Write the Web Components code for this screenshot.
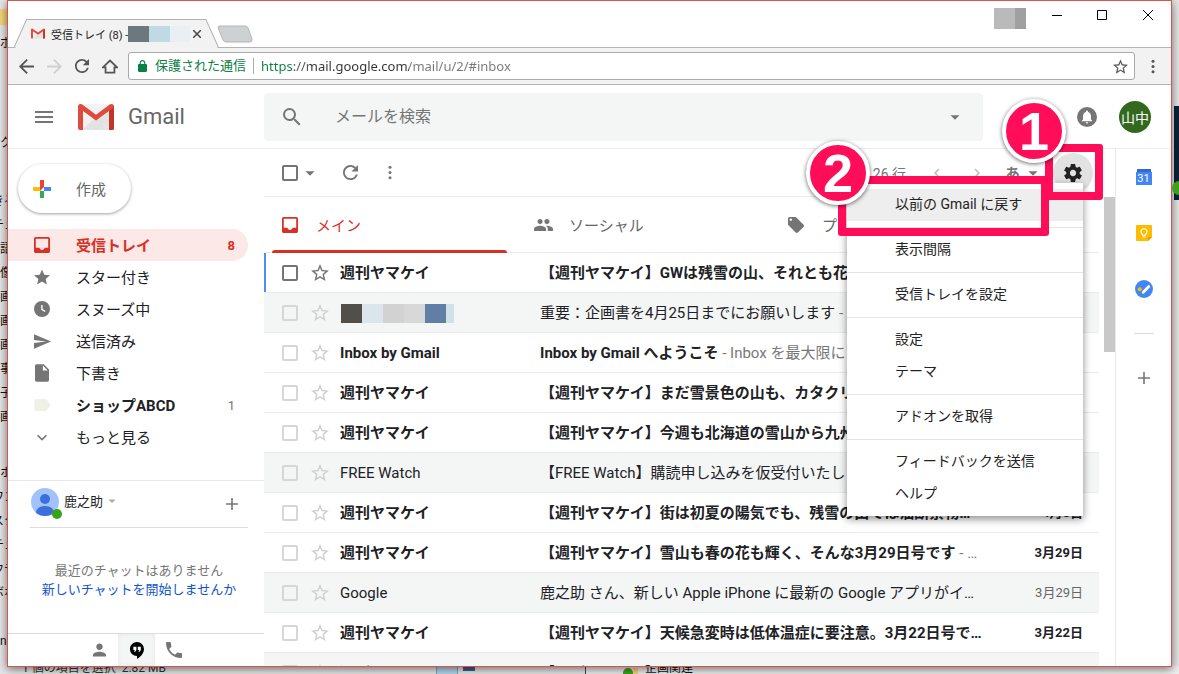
<!DOCTYPE html>
<html lang="ja">
<head>
<meta charset="utf-8">
<title>受信トレイ (8) - Gmail</title>
<style>
html, body { margin: 0; height: 100%; }
body { font-family: Roboto, "Noto Sans CJK JP", sans-serif; font-size: 15px; color: #202124; overflow: hidden; }
</style>
</head>
<body>
<desk-scene></desk-scene>
<script>
const BASE = `*{box-sizing:border-box}
button{font:inherit;color:inherit;background:none;border:0;padding:0;margin:0;display:flex;align-items:center;justify-content:center}
ul{list-style:none;margin:0;padding:0}a{color:inherit;text-decoration:none}input{font:inherit;margin:0}`;

function define(name, markup) {
  const template = document.createElement('template');
  customElements.define(name, class extends HTMLElement {
    constructor() {
      super();
      template.innerHTML = `<style>${BASE}</style>` + markup;
      this.attachShadow({ mode: 'open' }).append(template.content.cloneNode(true));
    }
  });
}

/* ---------- icons: [viewBox, markup] ---------- */
const envelope = `<path fill="#f2f2f2" d="M2 0h32v26H2z"/><path fill="#e3e3e3" d="M4 26 18 13l14 13z"/><path fill="#d8d8d8" d="M34 26V5L20 16z" opacity=".6"/>
<path fill="#dd4b3e" d="M2.500 0A2.500 2.500 0 0 0 0 2.500V24a2 2 0 0 0 2 2h3V7l13 9.500L31 7v19h3a2 2 0 0 0 2-2V2.500A2.500 2.500 0 0 0 33.500 0c-.8 0-1.300.2-1.800.6L18 10.700 4.300.6C3.800.2 3.300 0 2.500 0z"/><path fill="#c23527" d="M31 7l5-4v21a2 2 0 0 1-2 2h-3z"/>`;
const ICONS = {
  gmail: ['0 0 36 26', envelope],
  menu: ['3 6 18 12', '<path d="M3 18h18v-2H3v2zm0-5h18v-2H3v2zm0-7v2h18V6H3z"/>'],
  search: ['3 3 18 18', '<path d="M15.500 14h-.79l-.28-.27A6.471 6.471 0 0 0 16 9.500 6.500 6.500 0 1 0 9.500 16c1.610 0 3.090-.59 4.230-1.570l.27.28v.79l5 4.990L20.490 19l-4.990-5zm-6 0C7.010 14 5 11.990 5 9.500S7.010 5 9.500 5 14 7.010 14 9.500 11.990 14 9.500 14z"/>'],
  caret: ['0 0 24 24', '<path d="M6 9.500l6 6 6-6z"/>'],
  refresh: ['4 4 16 16', '<path d="M17.650 6.350A7.958 7.958 0 0 0 12 4c-4.420 0-7.990 3.580-7.990 8s3.570 8 7.990 8c3.730 0 6.840-2.550 7.730-6h-2.080A5.990 5.990 0 0 1 12 18c-3.310 0-6-2.690-6-6s2.690-6 6-6c1.660 0 3.140.69 4.220 1.780L13 11h7V4l-2.350 2.350z"/>'],
  dots: ['0 0 4 16', '<circle cx="2" cy="2.500" r="1.600"/><circle cx="2" cy="8" r="1.600"/><circle cx="2" cy="13.500" r="1.600"/>'],
  inbox: ['3 3 18 18', '<path d="M19 3H5c-1.100 0-2 .9-2 2v14c0 1.100.9 2 2 2h14c1.100 0 2-.9 2-2V5c0-1.100-.9-2-2-2zm0 12h-4c-.4 1.400-1.500 2.500-3 2.500S9.400 16.400 9 15H5V5h14v10z"/>'],
  star: ['2 2 20 19', '<path d="M12 17.270L18.180 21l-1.640-7.030L22 9.240l-7.190-.61L12 2 9.190 8.630 2 9.240l5.460 4.730L5.820 21z"/>'],
  starLine: ['2 2 20 19', '<path d="M22 9.240l-7.190-.62L12 2 9.190 8.630 2 9.240l5.460 4.730L5.820 21 12 17.270 18.180 21l-1.630-7.030L22 9.240zM12 15.400l-3.760 2.270 1-4.280-3.320-2.880 4.380-.38L12 6.100l1.710 4.040 4.380.38-3.320 2.880 1 4.280L12 15.400z"/>'],
  clock: ['0 0 16 16', '<path fill-rule="evenodd" d="M8 0a8 8 0 1 0 0 16A8 8 0 0 0 8 0zM7.200 4h1.400v4.100l3 1.900-.7 1.100L7.200 8.800z"/>'],
  send: ['2 3 21 18', '<path d="M2.010 21L23 12 2.010 3 2 10l15 2-15 2z"/>'],
  file: ['4 2 16 20', '<path d="M6 2c-1.100 0-2 .9-2 2v16c0 1.100.9 2 2 2h12c1.100 0 2-.9 2-2V8l-6-6H6zm7 7V3.500L18.500 9H13z"/>'],
  label: ['3 5 19 14', '<path d="M17.630 5.840C17.270 5.330 16.670 5 16 5L5 5.010C3.900 5.010 3 5.900 3 7v10c0 1.100.9 1.990 2 1.990L16 19c.67 0 1.270-.33 1.630-.84L22 12z"/>'],
  more: ['6 8 12 8', '<path d="M16.590 8.590L12 13.170 7.410 8.590 6 10l6 6 6-6z"/>'],
  prev: ['8 6 8 12', '<path d="M15.410 7.410L14 6l-6 6 6 6 1.410-1.410L10.830 12z"/>'],
  next: ['8 6 8 12', '<path d="M10 6L8.590 7.410 13.170 12l-4.580 4.590L10 18l6-6z"/>'],
  people: ['1 5 22 14', '<path d="M16 11c1.660 0 2.990-1.340 2.990-3S17.660 5 16 5s-3 1.340-3 3 1.340 3 3 3zm-8 0c1.660 0 2.990-1.340 2.990-3S9.660 5 8 5 5 6.340 5 8s1.340 3 3 3zm0 2c-2.330 0-7 1.170-7 3.500V19h14v-2.500c0-2.330-4.670-3.500-7-3.500zm8 0c-.29 0-.62.02-.97.05 1.160.84 1.970 1.970 1.970 3.450V19h6v-2.500c0-2.330-4.670-3.500-7-3.500z"/>'],
  tag: ['2 2 20 20', '<path d="M21.410 11.580l-9-9C12.050 2.220 11.550 2 11 2H4c-1.100 0-2 .9-2 2v7c0 .55.22 1.050.59 1.420l9 9c.36.36.86.58 1.410.58.55 0 1.050-.22 1.410-.59l7-7c.37-.36.59-.86.59-1.410 0-.55-.23-1.060-.59-1.420zM5.500 7C4.670 7 4 6.330 4 5.500S4.670 4 5.500 4 7 4.670 7 5.500 6.330 7 5.500 7z"/>'],
  gear: ['2 2 20 20', '<path d="M19.430 12.980c.04-.32.07-.64.07-.98s-.03-.66-.07-.98l2.110-1.650c.19-.15.24-.42.12-.64l-2-3.460c-.12-.22-.39-.3-.61-.22l-2.490 1c-.52-.4-1.080-.73-1.690-.98l-.38-2.650C14.460 2.180 14.250 2 14 2h-4c-.25 0-.46.18-.49.42l-.38 2.650c-.61.25-1.170.59-1.690.98l-2.490-1c-.23-.09-.49 0-.61.22l-2 3.460c-.13.22-.07.49.12.64l2.110 1.650c-.04.32-.07.65-.07.98s.03.66.07.98l-2.110 1.650c-.19.15-.24.42-.12.64l2 3.460c.12.22.39.3.61.22l2.490-1c.52.4 1.080.73 1.690.98l.38 2.650c.03.24.24.42.49.42h4c.25 0 .46-.18.49-.42l.38-2.650c.61-.25 1.170-.59 1.690-.98l2.490 1c.23.09.49 0 .61-.22l2-3.460c.12-.22.07-.49-.12-.64l-2.110-1.650zM12 15.500c-1.930 0-3.500-1.570-3.500-3.500s1.570-3.500 3.500-3.500 3.500 1.570 3.500 3.500-1.570 3.500-3.500 3.500z"/>'],
  bell: ['0 0 20 20', '<circle cx="10" cy="10" r="10"/><path fill="#fff" d="M10 3.500a1 1 0 0 0-1 1v.4C7.200 5.400 6 7 6 9v3.500L4.800 13.700v.6h10.400v-.6L14 12.500V9c0-2-1.200-3.600-3-4.100v-.4a1 1 0 0 0-1-1zM8.700 15.200a1.300 1.300 0 0 0 2.600 0z"/>'],
  person: ['4 4 16 16', '<path d="M12 12c2.210 0 4-1.790 4-4s-1.790-4-4-4-4 1.790-4 4 1.790 4 4 4zm0 2c-2.670 0-8 1.340-8 4v2h16v-2c0-2.660-5.330-4-8-4z"/>'],
  phone: ['3 3 18 18', '<path d="M6.620 10.790c1.440 2.830 3.760 5.140 6.590 6.590l2.200-2.200c.27-.27.67-.36 1.020-.24 1.120.37 2.330.57 3.570.57.55 0 1 .45 1 1V20c0 .55-.45 1-1 1-9.390 0-17-7.610-17-17 0-.55.45-1 1-1h3.500c.55 0 1 .45 1 1 0 1.250.2 2.450.57 3.570.11.35.03.74-.25 1.020z"/>'],
  hangouts: ['0 0 14 17', '<path d="M7 0a7 7 0 0 0-.2 14H7v2.800c3-1.500 7-5 7-9.800a7 7 0 0 0-7-7z"/><path fill="#fff" d="M3.400 4.800h3v3.100L5.200 9.700H4l.8-1.800H3.400zM7.800 4.800h3v3.100L9.600 9.700H8.400l.8-1.800H7.800z"/>'],
  plus: ['0 0 12 12', '<path d="M5.200 0h1.600v5.200H12v1.600H6.800V12H5.200V6.800H0V5.200h5.200z"/>'],
  back: ['4 4 16 16', '<path d="M20 11H7.830l5.590-5.590L12 4l-8 8 8 8 1.410-1.410L7.830 13H20v-2z"/>'],
  forward: ['4 4 16 16', '<path d="M12 4l-1.410 1.410L16.170 11H4v2h12.170l-5.580 5.590L12 20l8-8z"/>'],
  home: ['0 0 18 16', '<path fill="none" stroke="currentColor" stroke-width="2" d="M1 9 9 1.300 17 9h-3v6H4V9z"/>'],
  lock: ['4 1 16 21', '<path d="M18 8h-1V6c0-2.760-2.240-5-5-5S7 3.240 7 6v2H6c-1.100 0-2 .9-2 2v10c0 1.100.9 2 2 2h12c1.100 0 2-.9 2-2V10c0-1.100-.9-2-2-2zM9 6c0-1.660 1.340-3 3-3s3 1.340 3 3v2H9V6z"/>'],
  compose: ['0 0 18 18', '<path fill="#ea4335" d="M7 0h4v7l-4 4z"/><path fill="#4285f4" d="M11 7h7v4h-7z"/><path fill="#34a853" d="M7 11h4v7H7z"/><path fill="#fbbc05" d="M0 7h7v4H0z"/>'],
  close: ['0 0 10 10', '<path fill="none" stroke="currentColor" stroke-width="var(--stroke, 1)" style="stroke-width:var(--stroke,1)" d="M0 0l10 10M10 0L0 10"/>'],
  minimize: ['0 0 10 10', '<path d="M0 5h10v1H0z"/>'],
  maximize: ['0 0 10 10', '<path fill="none" stroke="currentColor" d="M.5.5h9v9h-9z"/>'],
  face: ['0 0 28 28', '<circle cx="14" cy="14" r="14" fill="#a1c2fa"/><circle cx="14" cy="11" r="5" fill="#3b6fdc"/><path fill="#3b6fdc" d="M5 24.700c0-4 4-6.700 9-6.700s9 2.700 9 6.700A14 14 0 0 1 5 24.700z"/>'],
  calendar: ['0 0 16 16', '<path fill="#3367d6" d="M1 0h14v5H1z"/><path fill="#4285f4" d="M0 3h16v13H0z"/>'],
  keep: ['0 0 16 16', '<path fill="#fbbc04" d="M1 0h14a1 1 0 0 1 1 1v11l-4 4H1a1 1 0 0 1-1-1V1a1 1 0 0 1 1-1z"/><path fill="#f29900" d="M16 12l-4 4v-4z"/><path fill="none" stroke="#fff" stroke-width="1.100" d="M6.500 9.500C5.500 8.800 5 8 5 6.800a3 3 0 0 1 6 0c0 1.200-.5 2-1.500 2.700v.8h-3zM6.500 12h3"/>'],
  tasks: ['0 0 18 18', '<circle cx="9" cy="9" r="9" fill="#4285f4"/><path stroke="#fff" stroke-width="2.800" stroke-linecap="round" d="M8.200 12.200l5.600-5.700"/><circle cx="4.800" cy="9.300" r="2" fill="#fbbc04"/>'],
};
customElements.define('ui-icon', class extends HTMLElement {
  connectedCallback() {
    if (this.shadowRoot) return;
    const [box, art] = ICONS[this.getAttribute('name')];
    const w = this.getAttribute('w') || 16, h = this.getAttribute('h') || w;
    this.attachShadow({ mode: 'open' }).innerHTML = `<style>:host{display:inline-flex;flex:none}svg{display:block;fill:currentColor}</style>
      <svg width="${w}" height="${h}" viewBox="${box}" aria-hidden="true">${art}</svg>`;
  }
});

/* ---------- mosaic strip that masks private text ---------- */
customElements.define('mosaic-strip', class extends HTMLElement {
  connectedCallback() {
    if (this.shadowRoot) return;
    const cells = this.getAttribute('cells').split(' ').map(c => c.split(':'));
    this.attachShadow({ mode: 'open' }).innerHTML = `<style>:host{display:inline-flex;flex:none}i{display:block}</style>` +
      cells.map(([w, c]) => `<i style="width:${w}px;background:${c}"></i>`).join('');
  }
});

/* ---------- browser chrome ---------- */
define('browser-tabs', `<style>
:host{display:flex;flex:none;height:47px;background:#fff;border-bottom:1px solid #b3b3b3;padding-left:6px;font-size:11px;align-items:flex-end}
.tab{position:relative;display:flex;align-items:center;width:205px;height:29px;padding:0 11px 0 17px;margin-bottom:-1px;color:#222}
.tab svg{position:absolute;left:0;top:0;width:100%;height:100%}
.tab>*:not(svg){position:relative}
.title{margin-left:6px;width:77px;white-space:nowrap}
mosaic-strip{height:16px}
.x{margin-left:3px;color:#444;--stroke:1.8}
.new{margin:0 0 4px -2px}
.controls{margin-left:auto;align-self:flex-start;display:flex;align-items:center;height:28px;color:#000}
.controls mosaic-strip{height:21px;margin:6px 26px 0 0}
.controls button{width:10px;margin-right:35px}
.controls button:last-child{margin-right:18px;margin-left:1px}
</style>
<div class="tab"><svg viewBox="0 0 204 29" preserveAspectRatio="none"><path fill="#f2f2f2" stroke="#b3b3b3" d="M0 28.500 12.500.5H191L203.500 28.500"/><path fill="#f2f2f2" d="M2 28h200v1H2z"/></svg>
<ui-icon name="gmail" w="14" h="11"></ui-icon><span class="title">受信トレイ (8) -</span><mosaic-strip cells="21:#6b797e 21:#bfd9e5 20:#e9eff2"></mosaic-strip>
<button class="x" aria-label="タブを閉じる"><ui-icon name="close" w="8"></ui-icon></button></div>
<button class="new" aria-label="新しいタブ"><svg width="36" height="18" viewBox="0 0 36 18"><path fill="#ced1d1" stroke="#b5b5b5" d="M2 1h26q2 0 3 2l4 11q.5 3-2 3H9q-2 0-3-2L1.500 4Q.5 1 2 1z"/></svg></button>
<div class="controls"><mosaic-strip cells="21:#bababa 11:#a0a0a0"></mosaic-strip>
<button aria-label="最小化"><ui-icon name="minimize" w="10"></ui-icon></button>
<button aria-label="最大化"><ui-icon name="maximize" w="10"></ui-icon></button>
<button aria-label="閉じる"><ui-icon name="close" w="10"></ui-icon></button></div>`);

define('address-bar', `<style>
:host{display:flex;flex:none;align-items:center;height:37px;background:#f2f2f2;border-bottom:1px solid #b5b5b5;padding:0 10px 0 4px;color:#555}
.nav{width:28px;height:28px}
.box{flex:1;display:flex;align-items:center;height:28px;margin:0 10px 0 4px;padding:0 6px 0 9px;background:#fff;border:1px solid #a9a9a9;border-radius:3px;font-size:13px}
.box>*:first-child{color:#0b8043;margin-right:8px}
.secure{color:#0b8043;border-right:1px solid #aaa;width:99px;line-height:16px;white-space:nowrap}
input{flex:1;min-width:0;border:0;outline:0;padding:0 0 0 7px;font:13px "Noto Sans","Noto Sans CJK JP",sans-serif;color:#444;
 background:linear-gradient(90deg,#0b8043 39px,#555 39px,#555 55px,#333 55px,#333 155px,#777 155px);-webkit-background-clip:text;background-clip:text;-webkit-text-fill-color:transparent}
</style>
<button class="nav" aria-label="戻る"><ui-icon name="back" w="15"></ui-icon></button>
<button class="nav" aria-label="進む" style="color:#d0d0d0"><ui-icon name="forward" w="15"></ui-icon></button>
<button class="nav" aria-label="再読み込み"><ui-icon name="refresh" w="14"></ui-icon></button>
<button class="nav" aria-label="ホーム"><ui-icon name="home" w="16" h="15"></ui-icon></button>
<div class="box"><ui-icon name="lock" w="9" h="12"></ui-icon><span class="secure">保護された通信</span>
<input aria-label="アドレス" value="https://mail.google.com/mail/u/2/#inbox" spellcheck="false">
<button aria-label="ブックマーク"><ui-icon name="starLine" w="15"></ui-icon></button></div>
<button aria-label="Chrome の設定" style="width:16px"><ui-icon name="dots" w="4" h="15"></ui-icon></button>`);

/* ---------- Gmail header ---------- */
define('mail-header', `<style>
:host{display:flex;flex:none;align-items:center;height:64px;border-bottom:1px solid #ebedef;padding:0 20px 0 27px;color:#757575}
.brand{display:flex;align-items:center;gap:14px;width:186px;margin-left:25px;font-size:22px;color:#666}
form{flex:0 1 719px;display:flex;align-items:center;height:48px;background:#f4f6f6;border-radius:4px;padding:0 19px}
input{flex:1;min-width:0;background:none;border:0;outline:0;font-size:16px;padding:0 0 0 34px;color:#555}
input::placeholder{color:#757575;opacity:1}
.right{margin-left:auto;display:flex;align-items:center;gap:22px}
.avatar{width:32px;height:32px;border-radius:50%;background:#33691e;color:#fff;font-size:14px}
</style>
<button aria-label="メインメニュー"><ui-icon name="menu" w="18" h="12"></ui-icon></button>
<a class="brand" href="#inbox"><ui-icon name="gmail" w="36" h="26"></ui-icon><span>Gmail</span></a>
<form role="search"><button type="button" aria-label="検索"><ui-icon name="search" w="18"></ui-icon></button>
<input aria-label="メールを検索" placeholder="メールを検索">
<button type="button" aria-label="検索オプション"><ui-icon name="caret" w="18"></ui-icon></button></form>
<div class="right"><button aria-label="通知"><ui-icon name="bell" w="20"></ui-icon></button><button class="avatar">山中</button></div>`);

/* ---------- sidebar ---------- */
define('nav-item', `<style>
:host{display:block}
a{display:flex;align-items:center;height:32px;padding:0 13px 0 26px;color:#202124}
.icon{width:16px;display:flex;justify-content:center;margin-right:26px;color:#757575}
.name{padding-bottom:2px}
.count{margin-left:auto;font-size:13px;color:#757575}
:host([active]) a{background:#fce8e6;border-radius:0 16px 16px 0}
:host([active]) :is(a,.icon,.count){color:#d93025}
:host([active]) .count{font-weight:700}
:host([strong]) .name,:host([active]) .name{font-weight:700}
</style><a href="#"><span class="icon"><slot name="icon"></slot></span><span class="name"><slot></slot></span><span class="count"><slot name="count"></slot></span></a>`);

define('side-bar', `<style>
:host{display:flex;flex-direction:column;width:256px;flex:none;min-height:0}
.compose{flex:none;width:113px;height:49px;margin:15px 0 16px 10px;border-radius:25px;background:#fff;box-shadow:0 1px 3px rgba(60,64,67,.5);color:#666;justify-content:flex-start;padding-left:15px;gap:25px}
nav{margin-right:16px;padding-bottom:27px}
.chat{flex:1;display:flex;flex-direction:column;border-top:1px solid #e6e6e6;min-height:0}
.me{display:flex;flex:none;align-items:center;height:47px;margin:0 16px 0 22px;border-bottom:1px solid #ddd;font-size:13px;padding:0 10px 4px 1px}
.me .name{padding-bottom:3px}
.who{position:relative;display:flex;margin-right:5px}
.who i{position:absolute;right:-3px;bottom:-3px;width:10px;height:10px;border-radius:50%;background:#35a518}
.me .add{margin-left:auto;color:#777;padding-top:4px}
.empty{flex:1;margin:0 16px 0 22px;padding-top:33px;text-align:center;font-size:13px;line-height:19px;color:#777;white-space:nowrap}
.empty a{color:#15c;display:block}
.tabs{display:flex;height:33px;flex:none;border-top:1px solid #ddd;padding-left:73px;color:#757575}
.tabs button{width:37px;height:32px}
.tabs button.on{background:#f4f6f6;color:#000;box-shadow:inset 0 0 4px #e4e4e4}
</style>
<button class="compose"><ui-icon name="compose" w="18"></ui-icon>作成</button>
<nav>
<nav-item active><ui-icon slot="icon" name="inbox" w="16"></ui-icon>受信トレイ<span slot="count">8</span></nav-item>
<nav-item><ui-icon slot="icon" name="star" w="16"></ui-icon>スター付き</nav-item>
<nav-item><ui-icon slot="icon" name="clock" w="16"></ui-icon>スヌーズ中</nav-item>
<nav-item><ui-icon slot="icon" name="send" w="17" h="15"></ui-icon>送信済み</nav-item>
<nav-item><ui-icon slot="icon" name="file" w="14" h="18"></ui-icon>下書き</nav-item>
<nav-item strong><ui-icon slot="icon" name="label" w="17" h="12" style="color:#f0f1e6"></ui-icon>ショップABCD<span slot="count">1</span></nav-item>
<nav-item><ui-icon slot="icon" name="more" w="10" h="7"></ui-icon>もっと見る</nav-item>
</nav>
<section class="chat">
<div class="me"><span class="who"><ui-icon name="face" w="28"></ui-icon><i></i></span><button class="name">鹿之助<ui-icon name="caret" w="14" style="color:#aaa;margin-left:2px"></ui-icon></button>
<button class="add" aria-label="新しい会話"><ui-icon name="plus" w="12"></ui-icon></button></div>
<div class="empty">最近のチャットはありません<a href="#chat">新しいチャットを開始しませんか</a></div>
<div class="tabs"><button aria-label="連絡先"><ui-icon name="person" w="13" h="14"></ui-icon></button><button class="on" aria-label="ハングアウト"><ui-icon name="hangouts" w="14" h="17"></ui-icon></button><button aria-label="電話"><ui-icon name="phone" w="16"></ui-icon></button></div>
</section>`);

/* ---------- settings menu and callouts ---------- */
define('settings-menu', `<style>
:host{display:block;width:236px;padding:6px 0;background:#fff;box-shadow:0 3px 8px rgba(0,0,0,.45);font-size:14px;color:#222}
button{width:100%;height:32px;padding:0 0 4px 48px;justify-content:flex-start}
button.on{background:#eee}
hr{margin:6px 0;border:0;height:1px;background:#e5e5e5}
</style>
<div role="menu"><button role="menuitem" class="on">以前の Gmail に戻す</button><hr>
<button role="menuitem">表示間隔</button><hr>
<button role="menuitem">受信トレイを設定</button><hr>
<button role="menuitem">設定</button><button role="menuitem">テーマ</button><hr>
<button role="menuitem">アドオンを取得</button><hr>
<button role="menuitem">フィードバックを送信</button><button role="menuitem">ヘルプ</button></div>`);

define('step-badge', `<style>
:host{display:flex;align-items:center;justify-content:center;width:64px;height:64px;border-radius:50%;border:4px solid #fff;background:#ff0d59;color:#fff;font:700 54px/54px "Liberation Sans",sans-serif;box-shadow:0 1px 4px rgba(0,0,0,.6)}
</style><slot></slot>`);

define('mail-toolbar', `<style>
:host{display:flex;flex:none;align-items:center;position:relative;z-index:2;height:48px;margin-right:16px;border-bottom:1px solid #ebebeb;padding:0 6px 0 18px;color:#757575}
input{appearance:none;width:16px;height:16px;border:2px solid #757575;border-radius:2px}
.drop{margin:0 21px 0 3px}
.range{margin-left:auto;font-size:14px;padding-right:11px}
.page{width:40px;height:40px;color:#bbb}
.lang{width:56px;font-weight:700;gap:4px;justify-content:flex-start;padding-left:8px}
.gear{width:40px;height:40px;border-radius:50%;background:#e2e2e2;color:#222}
settings-menu,step-badge,.frame{position:absolute}
settings-menu{right:16px;top:34px}
.frame{border:8px solid #ff0d59;border-radius:3px}
.f1{right:-4px;top:-5px;width:58px;height:56px}
.f2{right:50px;top:27px;width:211px;height:60px}
.s1{right:33px;top:-50px}
.s2{right:229px;top:-8px}
</style>
<input type="checkbox" aria-label="すべて選択"><button class="drop" aria-label="選択"><ui-icon name="caret" w="18"></ui-icon></button>
<button aria-label="更新" style="width:20px"><ui-icon name="refresh" w="15"></ui-icon></button>
<button aria-label="その他" style="width:20px;margin-left:20px"><ui-icon name="dots" w="4" h="15"></ui-icon></button>
<span class="range">26 行</span>
<button class="page" aria-label="前へ"><ui-icon name="prev" w="6" h="10"></ui-icon></button>
<button class="page" aria-label="次へ"><ui-icon name="next" w="6" h="10"></ui-icon></button>
<button class="lang">あ<ui-icon name="caret" w="18"></ui-icon></button>
<button class="gear" aria-label="設定"><ui-icon name="gear" w="18"></ui-icon></button>
<settings-menu></settings-menu>
<div class="frame f1"></div><div class="frame f2"></div>
<step-badge class="s1">1</step-badge><step-badge class="s2">2</step-badge>`);

/* ---------- category tabs and message list ---------- */
define('category-tabs', `<style>
:host{display:flex;height:56px;border-bottom:1px solid #ebebeb;color:#666}
button{position:relative;flex:0 1 253px;justify-content:flex-start;padding-left:18px;gap:18px}
ui-icon{color:#757575}
.on,.on ui-icon{color:#d93025}
.on::after{content:"";position:absolute;left:8px;right:10px;bottom:-1px;height:3px;background:#d93025;border-radius:3px 3px 0 0}
</style>
<button role="tab" aria-selected="true" class="on"><ui-icon name="inbox" w="16"></ui-icon>メイン</button>
<button role="tab" style="padding-left:17px;gap:16px"><ui-icon name="people" w="19" h="12"></ui-icon>ソーシャル</button>
<button role="tab"><ui-icon name="tag" w="16"></ui-icon>プ</button>`);

const MASK = '<mosaic-strip cells="21:#524f48 21:#dbe6ec 21:#d2d2d2 21:#d8d8d8 21:#617fa5 8:#cfe2e8"></mosaic-strip>';
const MAIL = [
  ['u', '週刊ヤマケイ', '【週刊ヤマケイ】GWは残雪の山、それとも花', '', ''],
  ['r', MASK, '重要：企画書を4月25日までにお願いします', '-', ''],
  ['u', 'Inbox by Gmail', 'Inbox by Gmail へようこそ', '- Inbox を最大限に', ''],
  ['u', '週刊ヤマケイ', '【週刊ヤマケイ】まだ雪景色の山も、カタクリ', '', ''],
  ['u', '週刊ヤマケイ', '【週刊ヤマケイ】今週も北海道の雪山から九州', '', ''],
  ['r', 'FREE Watch', '【FREE Watch】購読申し込みを仮受付いたし', '', ''],
  ['u', '週刊ヤマケイ', '【週刊ヤマケイ】街は初夏の陽気でも、残雪の山では油断禁物…', '', '4月5日'],
  ['u', '週刊ヤマケイ', '【週刊ヤマケイ】雪山も春の花も輝く、そんな3月29日号です', '- …', '3月29日'],
  ['r', 'Google', '鹿之助 さん、新しい Apple iPhone に最新の Google アプリがイ…', '', '3月29日'],
  ['u', '週刊ヤマケイ', '【週刊ヤマケイ】天候急変時は低体温症に要注意。3月22日号で…', '', '3月22日'],
  ['r', '週刊ヤマケイ', '【週刊ヤマケイ】', '', ''],
];
define('mail-list', `<style>
:host{display:block;font-size:15px}
table{width:100%;table-layout:fixed;border-collapse:separate;border-spacing:0}
td{height:40px;padding:0;border-bottom:1px solid #e9ebed;white-space:nowrap;overflow:hidden;vertical-align:middle;line-height:20px}
.r td{background:#f4f6f6}
.u :is(.from,.subj b,.date){font-weight:700}
.u .date{font-weight:500}
b{font-weight:400}
.pick{width:46px;padding-left:18px}.fav{width:30px;padding-left:1px}.from{width:200px}.date{width:112px;padding-right:16px;text-align:right;font-size:13px}
.r .date{color:#666}
.subj span{color:#777}
input{appearance:none;display:block;width:16px;height:16px;border:2px solid #d6d6d6;border-radius:2px}
.fav button{color:#d0d0d0}
tr:first-child .pick{box-shadow:inset 2px 0 #4d90f0}
tr:first-child input{border-color:#757575}
tr:first-child button{color:#757575}
mosaic-strip{height:19px;margin-left:1px;vertical-align:middle}
</style><table aria-label="メール"><tbody>` + MAIL.map(([kind, from, subject, snippet, date]) => `<tr class="${kind}">
<td class="pick"><input type="checkbox" aria-label="選択"></td><td class="fav"><button aria-label="スター"><ui-icon name="starLine" w="18" h="17"></ui-icon></button></td>
<td class="from">${from}</td><td class="subj"><b>${subject}</b> <span>${snippet}</span></td><td class="date">${date}</td></tr>`).join('') + `</tbody></table>`);

define('addon-rail', `<style>
:host{display:flex;flex-direction:column;align-items:center;flex:none;width:56px;border-left:1px solid #ebebeb;padding-top:8px;color:#757575}
button{width:40px;height:40px;margin-bottom:16px;position:relative}
.day{position:absolute;inset:2px 0 0;font-size:11px;line-height:40px;color:#fff;text-align:center}
hr{width:20px;height:1px;border:0;background:#ddd;margin:8px 0 24px}
</style>
<button aria-label="カレンダー"><ui-icon name="calendar" w="16"></ui-icon><span class="day">31</span></button>
<button aria-label="Keep"><ui-icon name="keep" w="16"></ui-icon></button>
<button aria-label="ToDo リスト"><ui-icon name="tasks" w="18"></ui-icon></button><hr>
<button aria-label="アドオンを取得"><ui-icon name="plus" w="12"></ui-icon></button>`);

define('mail-app', `<style>
:host{display:flex;flex-direction:column;flex:1;min-height:0;background:#fff}
.body{display:flex;flex:1;min-height:0}
main{flex:1;min-width:0;display:flex;flex-direction:column;min-height:0}
.scroll{display:flex;flex:1;min-height:0;overflow:hidden}
.content{flex:1;min-width:0}
.bar{width:16px;padding-left:5px}
.thumb{height:155px;background:#c8c8c8}
</style><mail-header></mail-header>
<div class="body"><side-bar></side-bar><main><mail-toolbar></mail-toolbar>
<div class="scroll"><div class="content"><category-tabs></category-tabs><mail-list></mail-list></div><div class="bar"><div class="thumb"></div></div></div></main>
<addon-rail></addon-rail></div>`);

define('browser-window', `<style>
:host{display:flex;flex-direction:column;position:relative;height:100%;border:1px solid #d9534f;box-shadow:0 2px 9px rgba(0,0,0,.55);background:#fff;overflow:hidden}
</style><slot></slot>`);

/* ---------- desktop: pieces of the windows behind show at the edges ---------- */
define('desk-scene', `<style>
:host{display:block;box-sizing:border-box;position:relative;height:100vh;padding:0 7px 7px;background:#e6e6e6;overflow:hidden}
.under{position:absolute;white-space:nowrap;font-size:12px;line-height:16px;color:#111}
.left{left:0;top:0;bottom:0;width:7px;overflow:hidden}
.left span{position:absolute;left:0}
.left .two{left:-8px}
.folder{left:0;top:9px;width:7px;height:16px;background:#f3d57c}
.dark{right:0;top:106px;width:5px;height:94px;background:#0d2038}
.ok{right:-7px;top:181px;width:14px;height:14px;border-radius:50%;background:#3aa31b}
.pane{bottom:0;left:585px;right:0;height:8px;background:#eee;border-left:1px solid #444}
.view{bottom:0;left:436px;width:22px;height:7px;background:#b5d9ec;border:1px solid #7aa9c4;border-width:0 1px}
.thumbs{bottom:3px;left:463px;width:12px;height:5px;background:#3d5f8c}
.yes{bottom:-4px;left:623px;width:10px;height:10px;border-radius:50%;background:#3aa31b}
.fold{bottom:0;left:633px;width:5px;height:6px;background:#f3d57c}
</style>
<div class="under folder"></div>
<div class="under left"><span style="top:35px">ボ</span><span style="top:135px">ク</span><span class="two" style="top:193px">きる</span><span class="two" style="top:217px">チュ</span><span style="top:241px">語</span><span style="top:265px">像</span><span style="top:289px">画</span><span style="top:313px">画</span><span style="top:337px">画</span><span style="top:361px">事</span><span style="top:385px">子</span><span style="top:409px">画</span><span style="top:465px">ホ</span><span class="two" style="top:489px">ワン</span><span class="two" style="top:513px">スク</span><span class="two" style="top:537px">チュ</span><span class="two" style="top:561px">ウチ</span><span class="two" style="top:585px">ボホ</span><span style="top:633px">ne</span></div>
<div class="under dark"></div>
<div class="under pane"></div><div class="under view"></div><div class="under thumbs"></div><div class="under yes"></div><div class="under fold"></div>
<div class="under" style="left:22px;bottom:-2px;color:#333">1 個の項目を選択&nbsp; 2.82 MB</div>
<div class="under" style="left:645px;bottom:-2px">企画関連</div>
<browser-window><browser-tabs></browser-tabs><address-bar></address-bar><mail-app></mail-app></browser-window>
<div class="under ok"></div>`);
</script>
</body>
</html>
